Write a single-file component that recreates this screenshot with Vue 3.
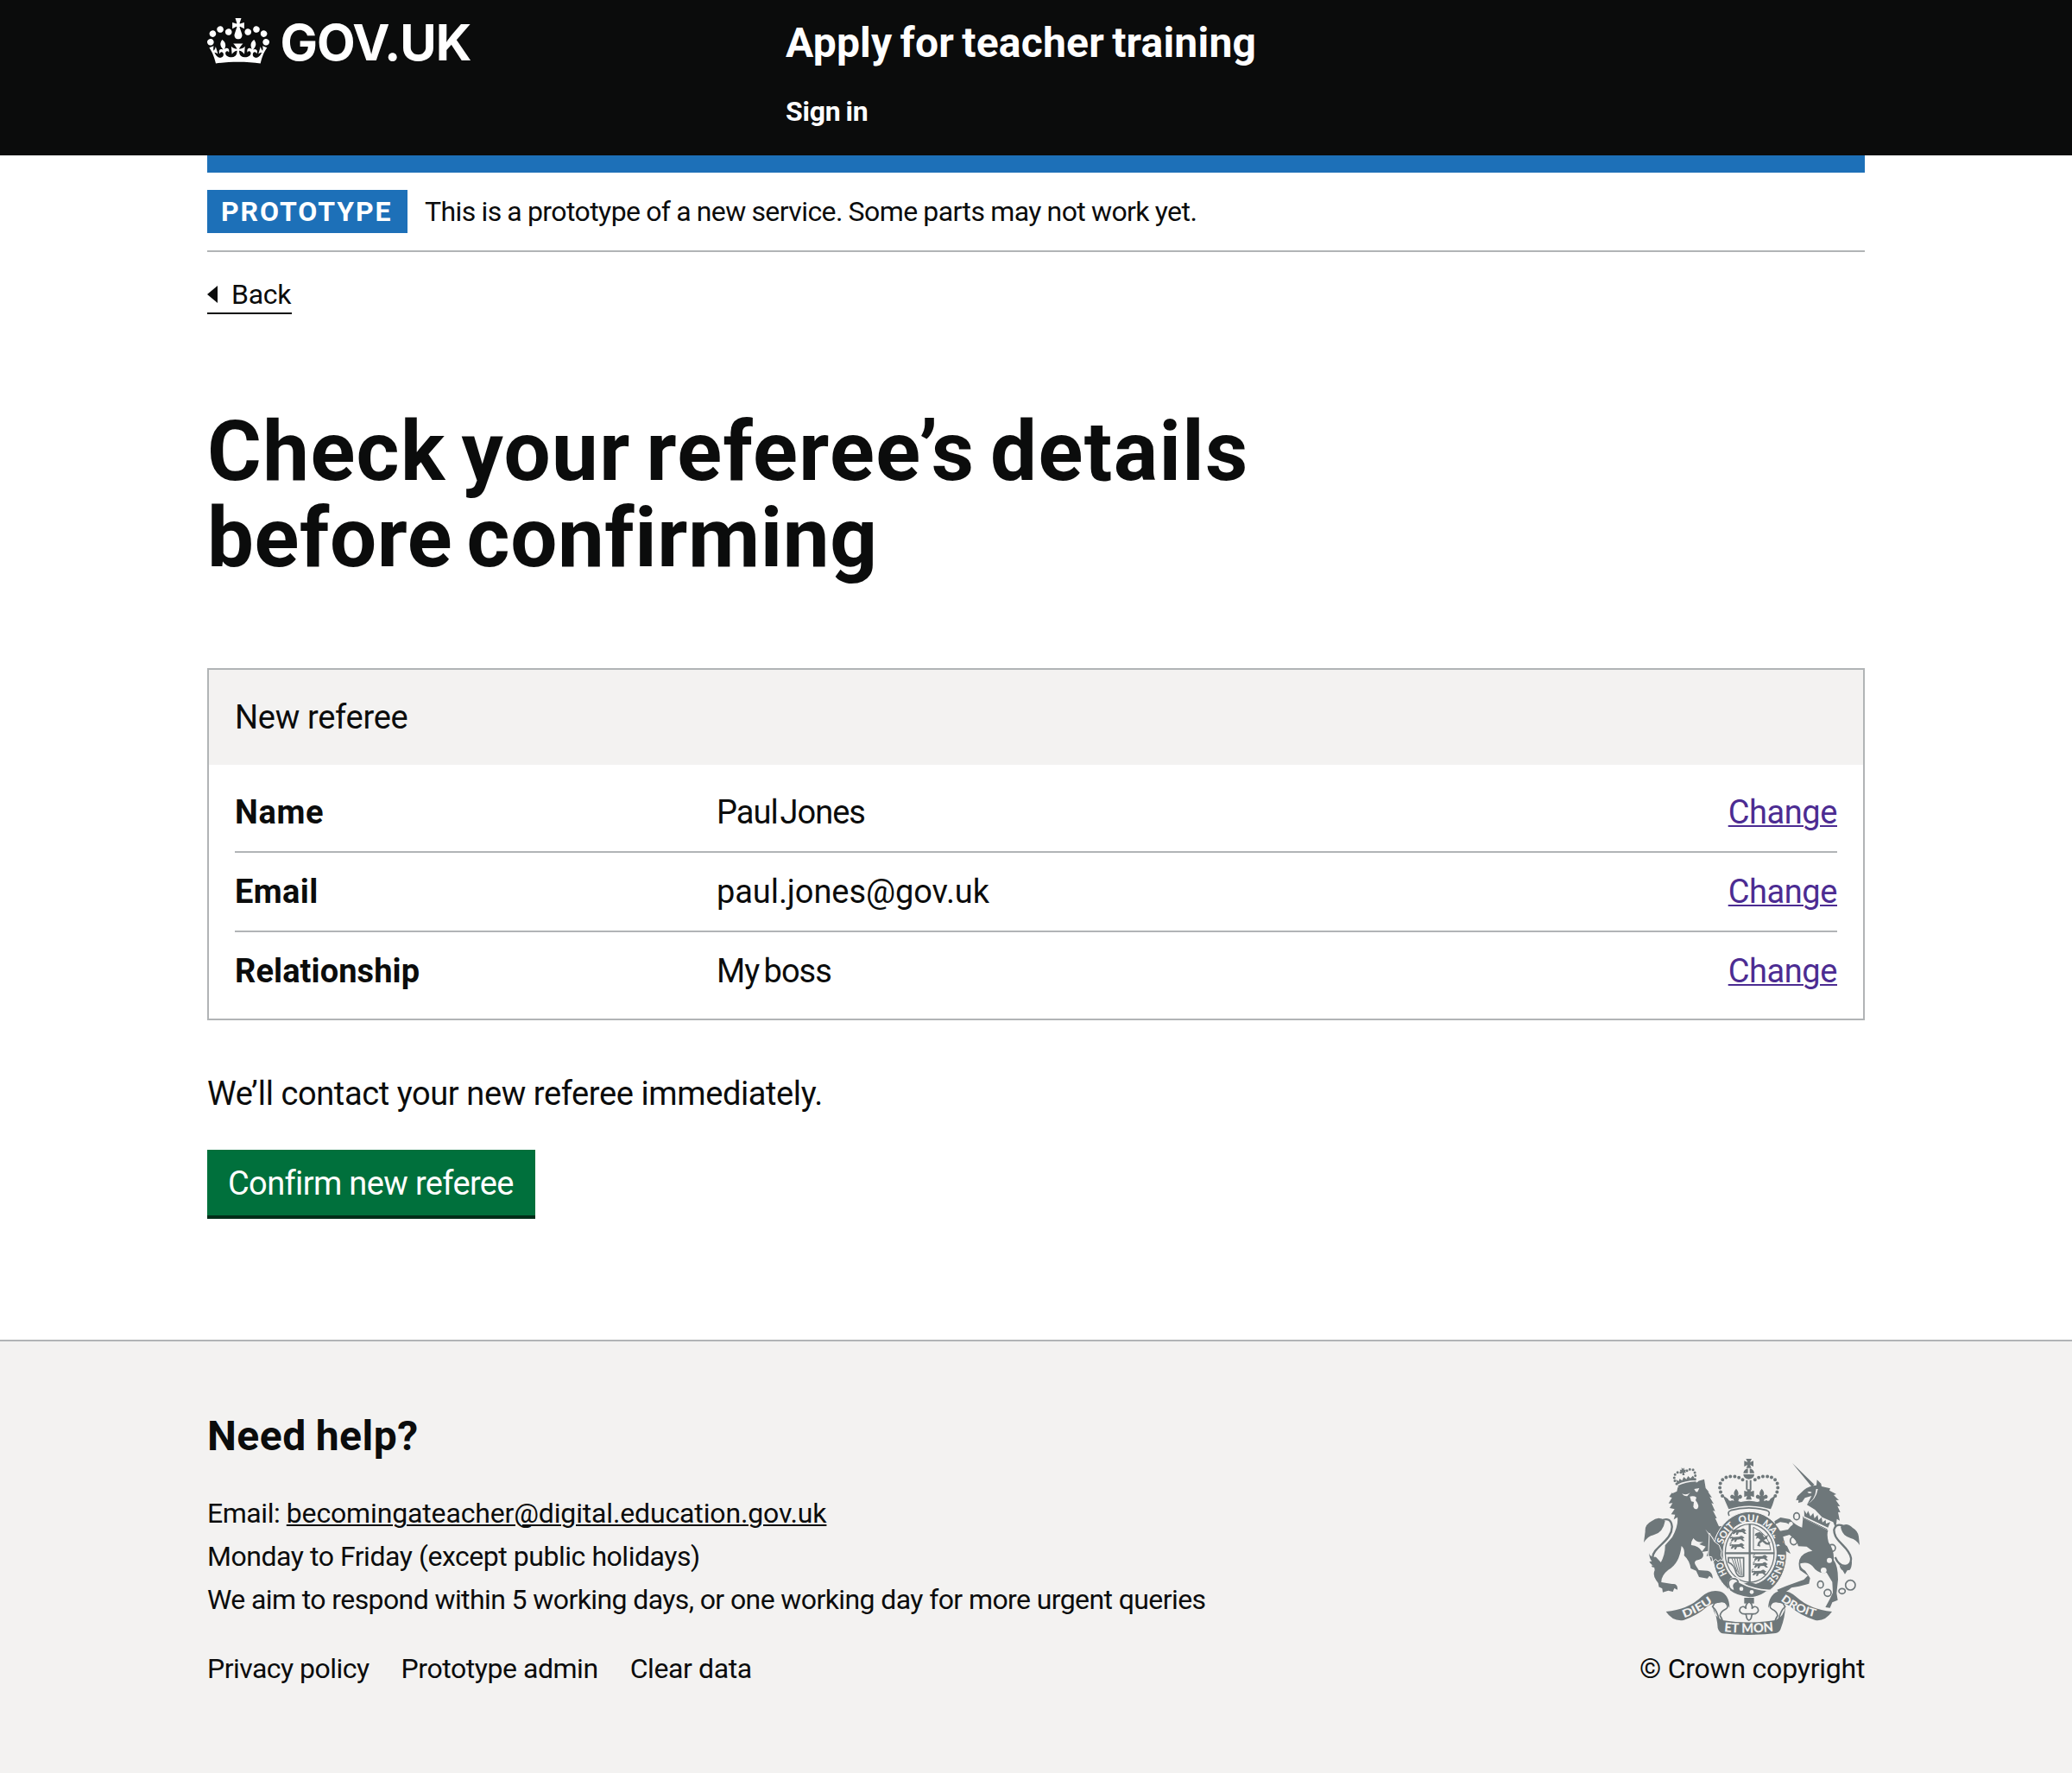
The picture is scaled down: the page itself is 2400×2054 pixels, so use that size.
<script setup>
const rows = [
  { key: 'Name', value: 'Paul Jones', keyClass: 'k-name', valueClass: 'v-name' },
  { key: 'Email', value: 'paul.jones@gov.uk', keyClass: 'k-email', valueClass: 'v-email' },
  { key: 'Relationship', value: 'My boss', keyClass: 'k-rel', valueClass: 'v-rel' },
]
const footerLinks = [
  { label: 'Privacy policy', cls: 'l-privacy' },
  { label: 'Prototype admin', cls: 'l-admin' },
  { label: 'Clear data', cls: 'l-clear' },
]
</script>

<template>
  <div class="page">
    <header class="header">
      <div class="wrap header-inner">
        <a class="logo">
          <svg class="crown" viewBox="0 0 132 97" preserveAspectRatio="none" fill="currentColor" aria-hidden="true">
            <path fill-rule="evenodd" d="M25 30.2c3.5 1.5 7.7-.2 9.1-3.7 1.5-3.6-.2-7.8-3.9-9.2-3.6-1.4-7.6.3-9.1 3.9-1.4 3.5.3 7.5 3.9 9zM9 39.5c3.6 1.5 7.8-.2 9.2-3.7 1.5-3.6-.2-7.8-3.9-9.1-3.6-1.5-7.6.2-9.1 3.8-1.4 3.5.3 7.5 3.8 9zM4.4 57.2c3.5 1.5 7.7-.2 9.1-3.8 1.5-3.6-.2-7.7-3.9-9.1-3.5-1.5-7.6.3-9.1 3.8-1.4 3.5.3 7.6 3.9 9.1zm38.3-21.4c3.5 1.5 7.7-.2 9.1-3.8 1.5-3.6-.2-7.7-3.9-9.1-3.6-1.5-7.6.3-9.1 3.8-1.3 3.6.4 7.7 3.9 9.1zm64.4-5.6c-3.6 1.5-7.8-.2-9.1-3.7-1.5-3.6.2-7.8 3.8-9.2 3.6-1.4 7.7.3 9.2 3.9 1.3 3.5-.4 7.5-3.9 9zm15.9 9.3c-3.6 1.5-7.7-.2-9.1-3.7-1.5-3.6.2-7.8 3.7-9.1 3.6-1.5 7.7.2 9.2 3.8 1.5 3.5-.3 7.5-3.8 9zm4.7 17.7c-3.6 1.5-7.8-.2-9.2-3.8-1.5-3.6.2-7.7 3.9-9.1 3.6-1.5 7.7.3 9.2 3.8 1.3 3.5-.4 7.6-3.9 9.1zM89.3 35.8c-3.6 1.5-7.8-.2-9.2-3.8-1.4-3.6.2-7.7 3.9-9.1 3.6-1.5 7.7.3 9.2 3.8 1.4 3.6-.3 7.7-3.9 9.1zM69.7 17.7l8.9 4.7V9.3l-8.9 2.8c-.2-.3-.5-.6-.9-.9L72.4 0H59.6l3.5 11.2c-.3.3-.6.5-.9.9l-8.8-2.8v13.1l8.8-4.7c.3.3.6.7.9.9l-5 15.4v.1c-.2.8-.4 1.6-.4 2.4 0 4.1 3.1 7.5 7 8.1h.2c.3 0 .7.1 1 .1.4 0 .7 0 1-.1h.2c4-.6 7.1-4.1 7.1-8.1 0-.8-.1-1.7-.4-2.4V34l-5.1-15.4c.4-.2.7-.6 1-.9zM66 92.8c16.9 0 32.8 1.1 47.1 3.2 4-16.9 8.9-26.7 14-33.5l-9.6-3.4c1 4.9 1.1 7.2 0 10.2-1.5-1.4-3-4.3-4.2-8.7L108.6 76c2.8-2 5-3.2 7.5-3.3-4.4 9.4-10 11.9-13.6 11.2-4.3-.8-6.3-4.6-5.6-7.9 1-4.7 5.7-5.9 8-.5 4.3-8.7-3-11.4-7.6-8.8 7.1-7.2 7.9-13.5 2.1-21.1-8 6.1-8.1 12.3-4.5 20.8-4.7-5.4-12.1-2.5-9.5 6.2 3.4-5.2 7.9-2 7.2 3.1-.6 4.3-6.4 7.8-13.5 7.2-10.3-.9-10.9-8-11.2-13.8 2.5-.5 7.1 1.8 11 7.3L80.2 60c-4.1 4.4-8 5.3-12.3 5.4 1.4-4.4 8-11.6 8-11.6H55.5s6.4 7.2 7.9 11.6c-4.2-.1-8-1-12.3-5.4l1.4 16.4c3.9-5.5 8.5-7.7 10.9-7.3-.3 5.8-.9 12.8-11.1 13.8-7.2.6-12.9-2.9-13.5-7.2-.7-5 3.8-8.3 7.1-3.1 2.7-8.7-4.6-11.6-9.4-6.2 3.7-8.5 3.6-14.7-4.6-20.8-5.8 7.6-5 13.9 2.2 21.1-4.7-2.6-11.9.1-7.7 8.8 2.3-5.5 7.1-4.2 8.1.5.7 3.3-1.3 7.1-5.7 7.9-3.5.7-9-1.8-13.5-11.2 2.5.1 4.7 1.3 7.5 3.3l-4.7-15.4c-1.2 4.4-2.7 7.2-4.3 8.7-1.1-3-.9-5.3 0-10.2l-9.5 3.4c5 6.9 9.9 16.7 14 33.5 14.8-2.1 30.8-3.2 47.7-3.2z" />
          </svg>
          <span class="logotype">GOV.UK</span>
        </a>
        <div class="header-content">
          <a class="service">Apply for teacher training</a>
          <a class="signin">Sign in</a>
        </div>
      </div>
    </header>

    <main class="wrap">
      <div class="bar"></div>
      <div class="phase">
        <strong class="tag">PROTOTYPE</strong>
        <span class="phase-text">This is a prototype of a new service. Some parts may not work yet.</span>
      </div>

      <a class="back">
        <svg width="12" height="20" viewBox="0 0 12 20" aria-hidden="true"><path d="M0 10 12 0v20z" fill="currentColor" /></svg>
        <span>Back</span>
      </a>

      <h1 class="title"><span class="t1">Check your referee’s details</span><span class="t2">before confirming</span></h1>

      <section class="card">
        <h2 class="card-head">New referee</h2>
        <dl class="list">
          <div v-for="r in rows" :key="r.key" class="row">
            <dt :class="r.keyClass">{{ r.key }}</dt>
            <dd :class="r.valueClass">{{ r.value }}</dd>
            <a class="change">Change</a>
          </div>
        </dl>
      </section>

      <p class="note">We’ll contact your new referee immediately.</p>
      <button class="button" type="button">Confirm new referee</button>
    </main>

    <footer class="footer">
      <div class="wrap footer-inner">
        <div class="help">
          <h2>Need help?</h2>
          <ul class="contact">
            <li class="c-email"><span class="c-label">Email: </span><a>becomingateacher@digital.education.gov.uk</a></li>
            <li class="c-days">Monday to Friday (except public holidays)</li>
            <li class="c-aim">We aim to respond within 5 working days, or one working day for more urgent queries</li>
          </ul>
          <nav class="links">
            <a v-for="l in footerLinks" :key="l.label" :class="l.cls">{{ l.label }}</a>
          </nav>
        </div>

        <div class="copyright">
          <svg class="crest" viewBox="72 60 750 612" aria-hidden="true">
            <defs>
              <path id="garter" d="M440 506A97 114 0 0 1 343 392A97 114 0 0 1 440 278A97 114 0 0 1 537 392A97 114 0 0 1 440 506" />
              <path id="dieu" d="M212 613Q270 592 320 552" />
              <path id="etmon" d="M351 661Q438 669 525 659" />
              <path id="droit" d="M547 552Q600 595 672 611" />
              <g id="fleur">
                <path d="M0-22Q13-8 5 4Q18-8 21 6Q20 15 9 13Q10 20 5 24H-5Q-10 20-9 13Q-20 15-21 6Q-18-8-5 4Q-13-8 0-22z" />
              </g>
              <g id="passant">
                <path d="M-30-7q5-5 12-2l19-1q10-7 14 0l5 3-6 4 7 8h-7l-8-6-12 1-4 8h-6l2-9-9 7h-5l5-12-7 3q-4-6 0-4z" />
                <path d="M-28-5q-6-12 4-10" fill="none" stroke="currentColor" stroke-width="3" />
              </g>
            </defs>

            <!-- imperial crown -->
            <g fill="currentColor">
              <path d="M427 60h20l-6 12 12-5v20l-12-6 5 11h-18l5-11-12 6V67l12 5z" />
              <path d="M418 110a19 19 0 0 1 16-16v16zM440 94a19 19 0 0 1 16 16h-16zM418 114h38q0 14-19 17-19-3-19-17z" />
              <path d="M427 134h6v33h-6zM440 134h6v33h-6z" />
              <path d="M421 171l11 3-3-8h17l-3 8 12-3v22l-12-4 4 13h-20l4-13-10 4z" />
              <use href="#fleur" x="393" y="186" /><use href="#fleur" x="482" y="186" />
              <path d="M346 187l18 12q6 12 14 5l10 3 9-1 12 4 13-2 16-2 16 2 13 2 12-4 10 1 10-3q8 7 13-5l18-12-11 34-6 14Q437 212 367 235l-6-14z" />
            </g>
            <g fill="none" stroke="currentColor">
              <path d="M345 189C325 152 340 120 381 121Q407 122 424 140" stroke-width="12" stroke-linecap="round" stroke-dasharray="0 15" />
              <path d="M529 189C549 152 534 120 493 121Q467 122 450 140" stroke-width="12" stroke-linecap="round" stroke-dasharray="0 15" />
              <path d="M369 258q-8-14 6-19 62-17 124 0 14 5 6 19" stroke-width="5" />
            </g>

            <!-- lion -->
            <g fill="currentColor">
              <path d="M190 154q28-14 64-15l-2 5q-30 2-58 14z" />
              <path d="M184 132l9 6 4-9 8 7 6-13 9 8 6-11 8 8 8-9 4 4 4 12q-32 0-61 14z" />
              <path d="M203 90l5 5 5-4-1 7 7 0-3 6 3 5-7-1 2 9h-8l0-9-7 2 1-6-3-6 7 0z" />
              <path d="M172 180l15-7 3-14q32-19 68-17l4-5 20-6 5 31 12 14-4-1 14 20-8-2 14 24-8-3 13 28-8-2 14 27-6-1 13 29 18-2-14 12q-16 18-20 42l-21-32 19 40q24 10 23 34l8 26-11 1-12 6-6-14-11 8-6-18-10 0 6-18-23 4 14-19-22-8 14-9q-20 6-35-12-9 14-7 24 26 2 37 22 16 24-20 31-10 6 0 20l9 14 31 2q17 4 18 27l-12-9-7 9-12-2-17-3-10-22-19-8q-4-28-23-45 4-22-9-33-7 62-46 83-25 20-24 43l37 6q21-3 19 20l-11-5-5 12-16-4-19 6-2-13-12-6q1-14-9-23-13-18-5-35l-3-19 24-7q16-30 15-60l25-29q22-40 18-69l-13 8 5-17-14-1 12-18-17-4 10-17-14 1 12-20-10-3 10-14z" />
            </g>
            <g fill="none" stroke="currentColor" stroke-linecap="round">
              <path d="M186 147Q172 128 182 112Q190 103 203 108" stroke-width="9" stroke-dasharray="0 11.5" />
              <path d="M250 131Q254 108 243 98Q230 92 218 105" stroke-width="9" stroke-dasharray="0 11.5" />
            </g>
            <g fill="#f3f2f1">
              <path d="M205 181q15 7 28-3l-10 12q-12 1-18-9zM247 165l18-3-6 13q-7 2-12-10zM232 191q14-4 23 3l-3 10q16 20 6 30-9 4-14-7l2-17-9-2z" />
              <path d="M286 305l28 31-3 7z" />
            </g>
            <g fill="none" stroke="currentColor" stroke-width="7" stroke-linecap="round">
              <path d="M174 404C147 434 106 434 103 402C102 368 172 345 170 295Q166 260 132 275" />
              <path d="M174 404Q140 442 103 433" />
            </g>
            <path fill="currentColor" d="M146 276q-22-20-47 1-24 12-22 36l-5 38q14-22 34-26 33-8 40-49zM114 401q-20 2-24-13 2 20 10 28l-9 1q9 18 28 16l14 10q-2-10 7-14z" />

            <!-- garter and shield -->
            <path fill="currentColor" stroke="#f3f2f1" stroke-width="3" fill-rule="evenodd" d="M440 244c71 0 128 66 128 148s-57 149-128 149-128-67-128-149 57-148 128-148zm0 36c-52 0-92 48-92 108s40 108 92 108 92-48 92-108-40-108-92-108z" />
            <ellipse cx="440" cy="388" rx="85" ry="101" fill="none" stroke="currentColor" stroke-width="4" />
            <path d="M440 287v202M355 388h170" fill="none" stroke="currentColor" stroke-width="7" />
            <g fill="currentColor">
              <use href="#passant" x="408" y="316" /><use href="#passant" x="402" y="341" /><use href="#passant" x="402" y="367" />
              <use href="#passant" x="483" y="408" /><use href="#passant" x="483" y="433" /><use href="#passant" x="478" y="459" />
              <path d="M461 319l14-5 10 7 5 12 14-9-4 13-11 6 12 9 11-3-4 10-12-1-12-10-9 7 2 10-11-3 3-11 8-9-8-7-8 3 4-9-8-3z" />
            </g>
            <g fill="none" stroke="currentColor" stroke-width="3">
              <path d="M453 298v79h60q-4-53-60-79z" />
              <path d="M366 404h53v64q-18 6-26-12-8-30-27-36z" stroke-width="5" />
              <path d="M378 405l19 49M387 405l16 57M396 405l13 61M405 405l9 60" />
            </g>
            <path fill="currentColor" d="M412 497l26-9 28 8 1 10h-57z" />
            <g class="motto" font-size="34">
              <text><textPath href="#garter" startOffset="94" textLength="46" lengthAdjust="spacingAndGlyphs">HO</textPath></text>
              <text><textPath href="#garter" startOffset="200" textLength="76" lengthAdjust="spacingAndGlyphs">SOIT</textPath></text>
              <text><textPath href="#garter" startOffset="295" textLength="64" lengthAdjust="spacingAndGlyphs">QUI</textPath></text>
              <text><textPath href="#garter" startOffset="376" textLength="66" lengthAdjust="spacingAndGlyphs">MAL</textPath></text>
              <text><textPath href="#garter" startOffset="456">Y</textPath></text>
              <text><textPath href="#garter" startOffset="496" textLength="102" lengthAdjust="spacingAndGlyphs">PENSE</textPath></text>
            </g>
            <path d="M367 490q10-22 26-16 12 4 10 14 52 28 102 29-30 26-66 26-44-4-69-24z" fill="currentColor" stroke="#f3f2f1" stroke-width="5" />
            <path d="M369 506q-9-22 9-29 19-2 22 12-14 1-16 13l4 15q-12 3-19-11z" fill="#f3f2f1" stroke="currentColor" stroke-width="5" />
            <circle cx="411" cy="512" r="7" fill="#f3f2f1" /><circle cx="447" cy="523" r="7" fill="#f3f2f1" />
            <path fill="currentColor" stroke="#f3f2f1" stroke-width="3" d="M300 318l18 30 16 12 8 22-2 14 9 18-12-3-7 6-8-8-10 8-4-16-12-2z" />

            <!-- unicorn -->
            <g fill="currentColor">
              <path d="M588 75l77 75-10 7zM600 207l6-17 23-22q15-14 43-16l2-19 14 13 2 10 30 7-3 7 24 13-9 3 18 18-11-1 15 22-9-1 10 22-8-1 6 30-10-6-4 33-9-22-38-17-25-26-28-17 16-31-23 7-10 14-13 3 1-10-9 1z" />
              <path d="M626 258l88 47q-8 16 0 45 20 26 18 62 15 20 15 67l-5 48 4 24-19 8-8 19-16-2 15-28 11-23-2-37-20-33q-28 8-49-22-15-17-42-9-2 15 17 25l17 26-4 19-34 9-27 5q-20 20-42 20l-8-13 33-13 60-22 14-14-28-20q-14-48 30-63l14-3-20-15-29-1q-5-22-31-40l-22 7-1 22 15 11 12 26-17-10-14-9-12-17 1-26-17-4 4-10 46-8 12-14-18-9-21-3-18 8-2-11 21-13 33 6q20 22 42 29z" />
            </g>
            <g fill="#f3f2f1">
              <path d="M640 176q8-4 16 1-6 7-16-1zM677 165q-7 40-39 53 30-15 33-53zM552 286l6-1-9 26z" />
              <path d="M630 232l94 50-8 29-90-45z" />
              <circle cx="697" cy="448" r="10" /><circle cx="717" cy="413" r="9" /><circle cx="583" cy="286" r="7" />
            </g>
            <path fill="currentColor" d="M629 238l9 14 5-11 8 19 10-12 4 19 11-12 3 19 11-11 3 18 11-9 1 14 15-6-8 19-82-39z" />
            <g fill="none" stroke="currentColor" stroke-width="5">
              <path d="M624 264l86 42" stroke-width="3" />
              <ellipse cx="603" cy="260" rx="10" ry="12" /><ellipse cx="593" cy="345" rx="12" ry="14" />
              <ellipse cx="726" cy="370" rx="12" ry="12" /><ellipse cx="686" cy="497" rx="10" ry="12" />
              <ellipse cx="711" cy="526" rx="12" ry="12" /><ellipse cx="761" cy="520" rx="11" ry="9" />
              <circle cx="790" cy="499" r="17" />
              <path d="M737 402C755 445 795 438 792 405C786 364 733 350 733 307Q740 280 771 296" stroke-width="7" />
            </g>
            <path fill="currentColor" d="M756 296q20-18 42 4 20 12 21 33l3 27q-12-20-31-24-30-8-35-40zM752 428q8 10 26 4 17-10 17-20 1 24-7 34l-9 2-8 13-8-13q-10-7-11-20z" />

            <!-- pendant -->
            <path fill="currentColor" d="M421 543h34v20h-34z" />
            <g fill="#f3f2f1" stroke="currentColor" stroke-width="5">
              <path d="M438 556q15 13 9 25 10-13 20-3 8 13-6 20l-13 2-3 14q-8 15-15 0l-3-14-13-2q-14-7-6-20 10-10 20 3-6-12 10-25z" />
              <path d="M424 599h28" />
            </g>

            <!-- ribbons -->
            <g fill="#f3f2f1" stroke="currentColor" stroke-width="5">
              <path d="M318 562q28-12 37-3 16 16 1 24-16 7-19 22 10 15 10 27l-14-14q-6-30-22-44z" />
              <path d="M556 562q-28-12-37-3-16 16-1 24 16 7 19 22-10 15-10 27l14-14q6-30 22-44z" />
            </g>
            <g fill="currentColor">
              <path d="M149 591Q226 584 272 540Q302 512 338 521Q369 532 370 578Q358 555 335 560Q309 561 292 574Q260 604 210 621Q172 626 149 591z" />
              <path d="M726 591Q650 584 602 540Q572 512 538 521Q507 532 504 578Q516 555 539 560Q565 561 582 574Q614 604 668 621Q702 626 726 591z" />
              <path d="M312 573Q314 608 345 621Q438 636 530 621Q559 608 564 573Q563 612 548 650Q545 662 531 666Q438 677 345 667Q333 663 329 648Q327 610 312 573z" />
            </g>
            <g class="motto" font-size="38">
              <text><textPath href="#dieu" textLength="114" lengthAdjust="spacingAndGlyphs">DIEU</textPath></text>
              <text font-size="45"><textPath href="#etmon" textLength="172" lengthAdjust="spacingAndGlyphs">ET MON</textPath></text>
              <text><textPath href="#droit" textLength="134" lengthAdjust="spacingAndGlyphs">DROIT</textPath></text>
            </g>
          </svg>
          <span class="crown-text">© Crown copyright</span>
        </div>
      </div>
    </footer>
  </div>
</template>

<style>
body {
  margin: 0;
  background: #fff;
}
</style>

<style scoped>
.page {
  display: flex;
  flex-direction: column;
  min-height: 2054px;
  color: #0b0c0c;
  font-family: Roboto, "Liberation Sans", sans-serif;
  font-size: 38px;
  line-height: 50px;
}
.wrap {
  width: 1920px;
  margin: 0 auto;
}
h1, h2, p, ul, dl, dd, dt { margin: 0; padding: 0; }
.header {
  height: 180px;
  background: #0b0c0c;
  color: #fff;
}
.header-inner { display: flex; }
.logo {
  display: flex;
  align-items: flex-start;
  width: 670px;
}
.crown {
  width: 72px;
  height: 53px;
  margin-top: 21px;
}
.logotype {
  margin: 14px 0 0 12.5px;
  font: 700 58px/70px Inter, sans-serif;
  letter-spacing: -1.05px;
}
.header-content {
  display: flex;
  flex-direction: column;
  padding-top: 19px;
  font-weight: 700;
}
.service {
  font-size: 48px;
  line-height: 61px;
  letter-spacing: 0.2px;
  word-spacing: -2.9px;
}
.signin {
  margin-top: 24px;
  font-size: 32px;
  letter-spacing: -0.25px;
  word-spacing: -1.5px;
}
.bar {
  height: 20px;
  background: #1d70b8;
}
.phase {
  display: flex;
  gap: 20px;
  padding: 20px 0;
  border-bottom: 2px solid #b1b4b6;
  font-size: 32px;
}
.tag {
  box-sizing: border-box;
  width: 232px;
  padding-left: 16px;
  background: #1d70b8;
  color: #fff;
  letter-spacing: 1.93px;
  white-space: nowrap;
}
.phase-text { letter-spacing: -0.58px; word-spacing: -0.6px; }
.back {
  display: flex;
  align-items: center;
  gap: 16px;
  box-sizing: border-box;
  width: 98px;
  margin-top: 28px;
  border-bottom: 2px solid #0b0c0c;
  font-size: 32px;
  line-height: 42px;
  letter-spacing: -0.3px;
}
.title {
  display: flex;
  flex-direction: column;
  margin-top: 109px;
  font-size: 96px;
  line-height: 100px;
  font-weight: 700;
}
.t1 { letter-spacing: 1.4px; word-spacing: -7.5px; }
.t2 { letter-spacing: 0.6px; word-spacing: -8px; }
.card {
  margin-top: 101px;
  border: 2px solid #b1b4b6;
}
.card-head {
  padding: 30px;
  background: #f3f2f1;
  font-size: 38px;
  font-weight: 400;
  letter-spacing: -0.3px;
}
.list { padding: 10px 30px; }
.row {
  display: flex;
  padding: 20px 0;
  border-bottom: 2px solid #b1b4b6;
}
.row:last-child { border-bottom: 0; }
.row dt { width: 558px; font-weight: 700; }
.row dd { flex: 1; }
.k-name { letter-spacing: 0.65px; }
.k-email { letter-spacing: 0.4px; }
.k-rel { letter-spacing: 0.08px; }
.v-name { letter-spacing: -1px; word-spacing: -5.5px; }
.v-email { letter-spacing: -0.08px; }
.v-rel { letter-spacing: -1px; word-spacing: -3px; }
.change {
  color: #4c2c92;
  letter-spacing: -0.42px;
  text-decoration: underline 2px;
  text-underline-offset: 2px;
}
.note {
  margin-top: 60px;
  letter-spacing: -0.4px;
}
.button {
  display: block;
  box-sizing: border-box;
  width: 380px;
  height: 76px;
  margin: 40px 0 0;
  padding: 14px 0 12px 24px;
  border: 0;
  background: #00703c;
  box-shadow: 0 4px 0 #002d18;
  color: #fff;
  font: inherit;
  letter-spacing: -0.64px;
  text-align: left;
  white-space: nowrap;
}
.footer {
  flex: 1;
  margin-top: 144px;
  border-top: 2px solid #b1b4b6;
  background: #f3f2f1;
  font-size: 32px;
}
.footer-inner {
  display: flex;
  justify-content: space-between;
  align-items: flex-end;
  padding-top: 79px;
}
.help h2 {
  font-size: 48px;
  line-height: 61px;
  letter-spacing: 0.5px;
  word-spacing: -1.5px;
}
.contact {
  margin-top: 34px;
  list-style: none;
}
.c-email { letter-spacing: -0.15px; }
.c-label { letter-spacing: -0.45px; }
.c-email a {
  text-decoration: underline 2px;
  text-underline-offset: 2px;
}
.c-days { letter-spacing: -0.46px; }
.c-aim { letter-spacing: -0.6px; }
.links {
  display: flex;
  gap: 37px;
  margin-top: 30px;
}
.l-privacy { letter-spacing: -0.53px; }
.l-admin { letter-spacing: -0.45px; }
.l-clear { letter-spacing: -0.4px; }
.copyright {
  display: flex;
  flex-direction: column;
  width: 261px;
}
.crest {
  width: 250px;
  height: 204px;
  margin: 0 0 14px 5px;
  color: #6e777a;
}
.crown-text { letter-spacing: -0.22px; white-space: nowrap; }
.motto {
  fill: #f3f2f1;
  font-family: Lato, sans-serif;
  font-weight: 900;
}
</style>
